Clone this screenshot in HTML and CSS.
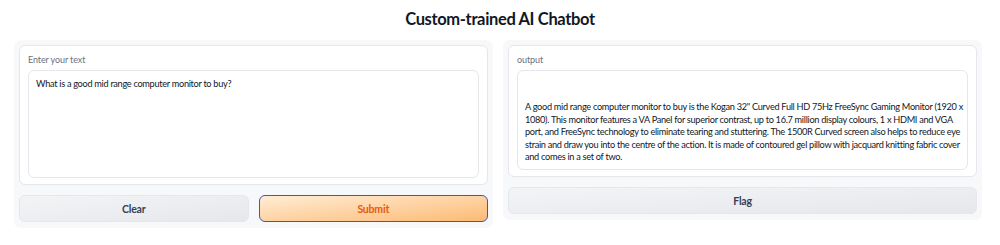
FILE: index.html
```html
<!DOCTYPE html>
<html lang="en">
  <head>
    <meta charset="UTF-8" />
    <title>Custom-trained AI Chatbot</title>
    <link rel="stylesheet" href="styles.css">
  </head>
  <body>
    <h1 class="title">Custom-trained AI Chatbot</h1>
    <div class="columns">
      <div class="panel">
        <div class="block">
          <label class="block-label" for="question">Enter your text</label>
          <div class="textbox input-box" id="question">What is a good mid range computer monitor to buy?</div>
        </div>
        <div class="button-row">
          <button type="button" class="btn">Clear</button>
          <button type="button" class="btn btn-primary">Submit</button>
        </div>
      </div>
      <div class="panel">
        <div class="block">
          <span class="block-label">output</span>
          <div class="textbox output-box">A good mid range computer monitor to buy is the Kogan 32" Curved Full HD 75Hz FreeSync Gaming Monitor (1920 x 1080). This monitor features a VA Panel for superior contrast, up to 16.7 million display colours, 1 x HDMI and VGA port, and FreeSync technology to eliminate tearing and stuttering. The 1500R Curved screen also helps to reduce eye strain and draw you into the centre of the action. It is made of contoured gel pillow with jacquard knitting fabric cover and comes in a set of two.</div>
        </div>
        <div class="button-row">
          <button type="button" class="btn">Flag</button>
        </div>
      </div>
    </div>
  </body>
</html>
```

FILE: styles.css
```css
body {
    margin: 0;
    padding: 0;
    background-color: #fff;
    font-family: Lato, "Open Sans", sans-serif;
    color: #1f2937;
}
.title {
    margin: 0;
    padding-top: 8px;
    height: 40px;
    box-sizing: border-box;
    text-align: center;
    font-size: 16.5px;
    line-height: 22px;
    font-weight: 700;
    letter-spacing: -0.35px;
    color: #111827;
}
.columns {
    display: flex;
    gap: 10px;
    padding: 0 18px 0 14px;
    align-items: flex-start;
}
.panel {
    flex: 1;
    background-color: #f7f8fa;
    border-radius: 7px;
    padding: 5px 5px 6px 5px;
    display: flex;
    flex-direction: column;
    gap: 10px;
}
.block {
    background-color: #fff;
    border: 1px solid #e5e7eb;
    border-radius: 6px;
    padding: 8px 8px 6px 8px;
}
.block-label {
    display: block;
    font-size: 9px;
    letter-spacing: -0.1px;
    color: #6b7280;
    margin-bottom: 5px;
    height: 11px;
    line-height: 11px;
}
.textbox {
    border: 1px solid #e5e7eb;
    border-radius: 6px;
    box-sizing: border-box;
    font-size: 9.2px;
    letter-spacing: -0.3px;
    color: #111827;
}
.input-box {
    height: 108px;
    padding: 7px 7px;
    line-height: 12px;
}
.output-box {
    height: 100px;
    padding: 5px 2px 5px 7px;
    line-height: 12.6px;
    display: flex;
    align-items: flex-end;
}
.button-row {
    display: flex;
    gap: 10px;
}
.btn {
    flex: 1;
    height: 27px;
    border: 1px solid #e5e7eb;
    border-radius: 6px;
    background: linear-gradient(to bottom right, #f3f4f6, #e5e7eb);
    font-family: inherit;
    font-size: 10.5px;
    font-weight: 700;
    letter-spacing: -0.2px;
    color: #374151;
    cursor: pointer;
}
.btn-primary {
    border: 1.5px solid #4054c6;
    background: linear-gradient(to bottom right, #ffedd5, #fdba74);
    color: #ea580c;
}
```
